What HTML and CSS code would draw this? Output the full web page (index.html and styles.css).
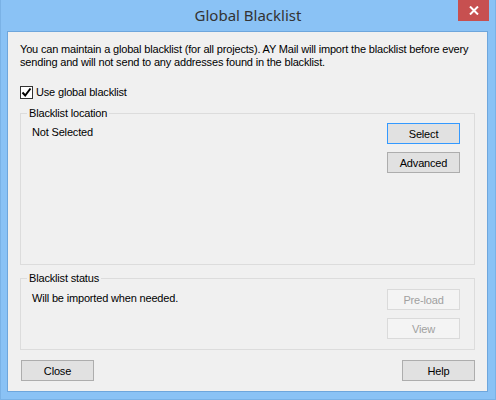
FILE: index.html
```html
<!DOCTYPE html>
<html lang="en">
<head>
    <meta charset="UTF-8">
    <title>Global Blacklist</title>
    <link rel="stylesheet" href="styles.css">
</head>
<body>
    <div class="window">
        <div class="titlebar">
            <span class="title">Global Blacklist</span>
            <div class="closeBtn">
                <svg width="10" height="9" viewBox="0 0 10 9">
                    <path d="M1 0.5 L9 8.5 M9 0.5 L1 8.5" stroke="#fff" stroke-width="2" />
                </svg>
            </div>
        </div>

        <div class="client">
            <p class="intro">You can maintain a global blacklist (for all projects). AY Mail will import the blacklist before every sending and will not send to any addresses found in the blacklist.</p>

            <label class="check">
                <span class="box">
                    <svg width="11" height="11" viewBox="0 0 11 11">
                        <path d="M1.5 5.5 L4.2 8.5 L9.5 1.5" stroke="#000" stroke-width="2" fill="none" />
                    </svg>
                </span>
                Use global blacklist
            </label>

            <fieldset class="group">
                <legend>Blacklist location</legend>
                <div class="groupBody locationBody">
                    <span class="value">Not Selected</span>
                    <div class="buttons">
                        <button class="btn default">Select</button>
                        <button class="btn">Advanced</button>
                    </div>
                </div>
            </fieldset>

            <fieldset class="group status">
                <legend>Blacklist status</legend>
                <div class="groupBody statusBody">
                    <span class="value">Will be imported when needed.</span>
                    <div class="buttons">
                        <button class="btn" disabled>Pre-load</button>
                        <button class="btn" disabled>View</button>
                    </div>
                </div>
            </fieldset>

            <div class="footer">
                <button class="btn">Close</button>
                <button class="btn">Help</button>
            </div>
        </div>
    </div>
</body>
</html>
```

FILE: styles.css
```css
body {
    margin: 0;
    background: #8ac2f5;
}

.window {
    width: 496px;
    height: 400px;
    box-sizing: border-box;
    background: #8ac2f5;
    border-left: 1px solid #7ab2e6;
    border-right: 1px solid #7ab2e6;
    border-bottom: 1px solid #7ab2e6;
    display: flex;
    flex-direction: column;
}

.titlebar {
    height: 31px;
    flex-shrink: 0;
    display: flex;
    justify-content: center;
    position: relative;
}

.title {
    font-family: "Noto Sans", sans-serif;
    font-size: 15px;
    color: #333;
    line-height: 31px;
}

.closeBtn {
    position: absolute;
    top: 0;
    right: 6px;
    width: 31px;
    height: 21px;
    background: #c75050;
    display: flex;
    align-items: center;
    justify-content: center;
}

.client {
    margin: 0 7px 7px 6px;
    flex: 1;
    background: #f0f0f0;
    border: 1px solid #6ea6dc;
    display: flex;
    flex-direction: column;
    font-family: "Liberation Sans", Arial, sans-serif;
    font-size: 11px;
    letter-spacing: -0.17px;
    color: #000;
}

.intro {
    margin: 0;
    padding: 11px 4px 0 12px;
    line-height: 13px;
    height: 26px;
}

.check {
    display: flex;
    align-items: center;
    gap: 3px;
    margin: 17px 0 0 12px;
    height: 13px;
    line-height: 13px;
}

.box {
    width: 11px;
    height: 11px;
    border: 1px solid #333;
    background: #fff;
    display: flex;
}

.group {
    margin: 7px 12px 0 12px;
    padding: 0;
    border: 1px solid #dcdcdc;
    min-width: 0;
}

.group legend {
    margin-left: 6px;
    padding: 0 2px;
    line-height: 14px;
}

.groupBody {
    display: flex;
    justify-content: space-between;
    align-items: flex-start;
    padding: 3px 14px 0 11px;
    box-sizing: border-box;
}

.locationBody {
    height: 144px;
}

.status {
    margin-top: 6px;
}

.statusBody {
    height: 64px;
    padding-top: 4px;
}

.value {
    margin-top: 3px;
    line-height: 13px;
}

.buttons {
    display: flex;
    flex-direction: column;
    gap: 8px;
}

.btn {
    width: 73px;
    height: 21px;
    padding: 0;
    background: #e1e1e1;
    border: 1px solid #adadad;
    border-radius: 0;
    font-family: "Liberation Sans", Arial, sans-serif;
    font-size: 11px;
    letter-spacing: -0.17px;
    color: #000;
}

.btn.default {
    border-color: #3399ff;
}

.btn:disabled {
    background: #f4f4f4;
    border-color: #dadada;
    color: #a0a0a0;
}

.footer {
    display: flex;
    justify-content: space-between;
    padding: 10px 12px 0 13px;
}
```
